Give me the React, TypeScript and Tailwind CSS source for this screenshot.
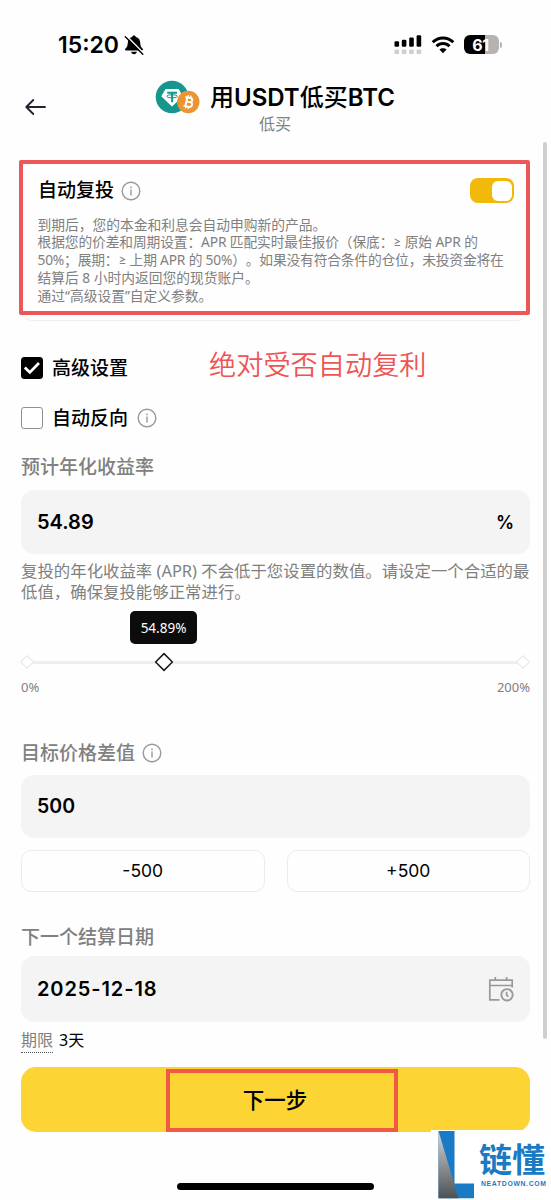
import { useState } from "react";
import type { ReactNode } from "react";
import { clsx } from "clsx";

const termLines = [
  { text: "到期后，您的本金和利息会自动申购新的产品。", spacing: "" },
  { text: "根据您的价差和周期设置：APR 匹配实时最佳报价（保底：≥ 原始 APR 的", spacing: "tracking-[-0.120px]" },
  { text: "50%；展期：≥ 上期 APR 的 50%）。如果没有符合条件的仓位，未投资金将在", spacing: "tracking-[-0.180px]" },
  { text: "结算后 8 小时内返回您的现货账户。", spacing: "" },
  { text: "通过“高级设置”自定义参数。", spacing: "" },
];

const InfoIcon = () => (
  <svg width="20" height="20" viewBox="0 0 20 20" fill="none" stroke="#999" strokeWidth="1.4">
    <circle cx="10" cy="10" r="8.8" />
    <path d="M10 8.6v5.8" />
    <path d="M10 5.4v1.8" />
  </svg>
);

const BellOff = () => (
  <svg width="20" height="20" viewBox="0 0 20 20">
    <path
      d="M10 .6c1 0 1.700.6 1.800 1.400 2.900.7 4.300 2.900 4.400 5.500.1 3.300.6 4.400 2.500 6.200.5.600.3 1.700-.7 1.700H2c-1 0-1.200-1.100-.7-1.700 1.900-1.800 2.400-2.900 2.500-6.200.1-2.600 1.500-4.800 4.400-5.500C8.300 1.200 9 .6 10 .6z"
      fill="#000"
    />
    <path d="M7.100 16.800h5.800c-.3 1.600-1.400 2.500-2.900 2.500s-2.600-.9-2.900-2.500z" fill="#000" />
    <path d="M2.400.800l17 17.200" stroke="#fff" strokeWidth="1.500" />
    <path d="M1.300 1.700l17.500 17.500" stroke="#000" strokeWidth="1.400" strokeLinecap="round" />
  </svg>
);

const SignalIcon = () => (
  <svg width="28" height="20" viewBox="0 0 28 20">
    <g fill="#000">
      <rect x="0.500" y="6.300" width="4.600" height="5.500" rx="1.200" />
      <rect x="7.800" y="4.800" width="4.600" height="7" rx="1.200" />
      <rect x="15.200" y="2.600" width="4.600" height="9.200" rx="1.200" />
      <rect x="22.600" y="0.300" width="4.600" height="11.500" rx="1.200" />
    </g>
    <g fill="#cfcfcf">
      <rect x="0.500" y="14.500" width="4.600" height="4.600" rx="1.200" />
      <rect x="7.800" y="14.500" width="4.600" height="4.600" rx="1.200" />
      <rect x="15.200" y="14.500" width="4.600" height="4.600" rx="1.200" />
      <rect x="22.600" y="14.500" width="4.600" height="4.600" rx="1.200" />
    </g>
  </svg>
);

const WifiIcon = () => (
  <svg width="24" height="18" viewBox="0 0 24 18" fill="none" stroke="#000" strokeWidth="3">
    <path d="M1.700 6.300C7.300.6 16.700.6 22.300 6.300" />
    <path d="M5.500 10.300c3.600-3.600 9.400-3.600 13 0" />
    <path d="M12 17.300l-3.600-3.700c2-1.900 5.200-1.900 7.200 0z" fill="#000" stroke="none" />
  </svg>
);

const Battery = () => (
  <div className="flex items-center">
    <div className="flex h-[19px] w-[35px] items-center justify-center rounded-[6px] bg-[linear-gradient(90deg,#000_61%,#b3b3b3_61%)] pr-[2px] font-['Inter'] text-[16px] leading-none font-bold tracking-[-0.5px] text-white">
      61
    </div>
    <div className="ml-px h-[6px] w-[2px] rounded-r-full bg-[#b3b3b3]" />
  </div>
);

const CoinPair = () => (
  <svg width="46" height="34" viewBox="0 0 46 34">
    <circle cx="17" cy="17" r="16.300" fill="#17968d" />
    <path d="M10.600 9h13l4.200 7.300L17 26.500 6.200 16.300z" fill="#fff" />
    <g fill="none" stroke="#17968d">
      <path d="M12.200 12.700h9.800M17.100 12.700v9.500" strokeWidth="2" />
      <ellipse cx="17.100" cy="16.300" rx="5.300" ry="1.600" strokeWidth="1" />
    </g>
    <circle cx="33.300" cy="22" r="11.200" fill="#eb9532" />
    <g transform="rotate(12 33.300 22)" fill="none" stroke="#fff" strokeWidth="1.900">
      <path d="M29.400 17.600h5.200c3 0 3 4.200 0 4.200h-3.500 3.900c3.400 0 3.400 4.800 0 4.800h-5.600M31.300 17.600v9" />
      <path d="M32 15.300v2.300M34.600 15.300v2.300M32 26.600v2.300M34.600 26.600v2.300" strokeWidth="1.400" />
    </g>
  </svg>
);

const CalendarClock = () => (
  <svg width="26" height="26" viewBox="0 0 26 26" fill="none" stroke="#999" strokeWidth="1.700">
    <path d="M11.500 23.800H1.800V4.200h22.400v5.300H1.800" />
    <path d="M7.300 1v3.200M18.700 1v3.200M24.200 9.500v2" />
    <circle cx="19" cy="18.800" r="5.700" strokeWidth="1.900" />
    <path d="M18.600 15.800v3.200l1.800 1.700" />
  </svg>
);

const Diamond = ({ active = false }: { active?: boolean }) => (
  <svg width="20" height="20" viewBox="0 0 20 20" className="relative z-10 shrink-0">
    <path
      d={active ? "M10 1.600L18.400 10 10 18.400 1.600 10z" : "M10 3.700L16.300 10 10 16.300 3.700 10z"}
      fill="#fff"
      stroke={active ? "#181818" : "#ececec"}
      strokeWidth="1.500"
      strokeLinejoin="round"
    />
  </svg>
);

const Label = ({ children, info = false }: { children: ReactNode; info?: boolean }) => (
  <div className="flex h-6 items-center gap-[7px] text-[19px] leading-none font-medium text-[#808080]">
    <span>{children}</span>
    {info && <InfoIcon />}
  </div>
);

const CheckRow = ({
  label,
  checked,
  onChange,
  info = false,
}: {
  label: string;
  checked: boolean;
  onChange: () => void;
  info?: boolean;
}) => (
  <div className="flex h-[22px] items-center">
    <button
      onClick={onChange}
      className={clsx(
        "flex size-[22px] items-center justify-center rounded-[3px] border",
        checked ? "border-black bg-black" : "border-[#909090] bg-white"
      )}
    >
      {checked && (
        <svg width="18" height="14" viewBox="0 0 18 14" fill="none" stroke="#fff" strokeWidth="2.800">
          <path d="M1.800 6.600l5 4.800 9.200-9.300" />
        </svg>
      )}
    </button>
    <span className="ml-[9px] text-[19px] leading-none font-medium text-black">{label}</span>
    {info && (
      <span className="ml-[9px]">
        <InfoIcon />
      </span>
    )}
  </div>
);

const Watermark = () => (
  <div className="absolute top-[1130px] left-[431px] flex h-[70px] w-[120px] bg-white pl-[7px]">
    <svg width="37" height="69" viewBox="0 0 37 69" className="shrink-0">
      <defs>
        <linearGradient id="steel" x1="0" y1="0" x2="0" y2="1">
          <stop offset="0" stopColor="#d4d6d6" />
          <stop offset="1" stopColor="#4c5154" />
        </linearGradient>
      </defs>
      <path d="M.5 1H16.500v52.500H36V68.300H.5z" fill="#1b7ac4" />
      <path d="M.5 1L20.500 68.300H.5z" fill="url(#steel)" />
    </svg>
    <div className="ml-1 flex flex-col whitespace-nowrap text-[#1b7ac4]">
      <span className="mt-[13px] text-[33px] leading-[34px] font-bold">链懂</span>
      <span className="mt-[2px] ml-[2px] font-['Liberation_Sans'] text-[6.800px] leading-[10px] font-bold tracking-[0.700px]">
        NEATDOWN.COM
      </span>
    </div>
  </div>
);

export default function App() {
  const [autoInvest, setAutoInvest] = useState(true);
  const [advanced, setAdvanced] = useState(true);
  const [reverse, setReverse] = useState(false);

  return (
    <div className="relative h-[1200px] w-[551px] overflow-hidden bg-[#fefefe] font-['Noto_Sans','Lato','Noto_Sans_CJK_SC',sans-serif] text-black">
      {/* Status bar */}
      <div className="flex h-[68px] items-start pt-[34px] pr-[49px] pl-[58px]">
        <div className="flex h-[22px] items-center gap-1">
          <span className="w-[62px] font-['Inter'] text-[23px] leading-none font-semibold whitespace-nowrap">15:20</span>
          <BellOff />
        </div>
        <div className="ml-auto flex h-[21px] items-center gap-[9px]">
          <SignalIcon />
          <WifiIcon />
          <Battery />
        </div>
      </div>

      {/* Header */}
      <header className="flex h-[74px] items-start pl-[24px]">
        <svg width="24" height="18" viewBox="0 0 24 18" fill="none" stroke="#202630" strokeWidth="1.900" strokeLinecap="round" strokeLinejoin="round" className="mt-[30px]">
          <path d="M21 9H2.300M9.300 2L2.300 9l7 7" />
        </svg>
        <div className="ml-[107px] flex flex-col">
          <div className="mt-[12px] flex h-[34px] items-center gap-[9px]">
            <CoinPair />
            <h1 className="pt-[2px] font-['Inter','Noto_Sans_CJK_SC',sans-serif] text-[24px] leading-none font-medium whitespace-nowrap">
              用<span className="font-semibold">USDT</span>低买<span className="font-semibold">BTC</span>
            </h1>
          </div>
          <span className="ml-[104px] text-[16px] leading-[20px] text-[#808080]">低买</span>
        </div>
      </header>

      <main className="flex flex-col pr-[21px] pl-[21px]">
        {/* Auto-invest card */}
        <section className="-ml-[2px] mt-[18px] rounded-b-[14px] border-b border-[#eee] pb-[5px]">
          <div className="h-[155px] rounded-[2px] border-4 border-[#eb5858] pt-[14px] pr-[12px] pl-[15px]">
            <div className="flex h-[25px] items-center">
              <span className="text-[19px] leading-none font-medium">自动复投</span>
              <span className="ml-[7px]">
                <InfoIcon />
              </span>
              <button
                onClick={() => setAutoInvest(!autoInvest)}
                className={clsx(
                  "ml-auto flex h-[25px] w-[44px] items-center rounded-[8px] px-[2px]",
                  autoInvest ? "justify-end bg-[#f0b90b]" : "justify-start bg-[#ccc]"
                )}
              >
                <span className="h-[20px] w-[20px] rounded-[6px] bg-white" />
              </button>
            </div>
            <div className="mt-[12.500px] -ml-[0.500px] text-[13.750px] leading-[17.850px] whitespace-nowrap text-[#808080] [text-spacing-trim:space-all]">
              {termLines.map((line) => (
                <p key={line.text} className={line.spacing}>
                  {line.text}
                </p>
              ))}
            </div>
          </div>
        </section>

        {/* Advanced settings */}
        <div className="mt-[36px] flex h-[22px] items-center">
          <CheckRow label="高级设置" checked={advanced} onChange={() => setAdvanced(!advanced)} />
          <span className="ml-[81px] -translate-y-[3px] text-[27.200px] leading-[28px] font-[350] text-[#ef5454]">
            绝对受否自动复利
          </span>
        </div>
        <div className="mt-[28px]">
          <CheckRow label="自动反向" checked={reverse} onChange={() => setReverse(!reverse)} info />
        </div>

        <div className="mt-[26px]">
          <Label>预计年化收益率</Label>
        </div>
        <div className="mt-[11px] flex h-[64px] items-center justify-between rounded-[13px] bg-[#f4f4f4] px-4 font-['Inter'] text-[20px] font-semibold">
          <span>54.89</span>
          <span className="text-[18px]">%</span>
        </div>
        <div className="mt-[7px] text-[16.420px] leading-[20.700px] whitespace-nowrap text-[#808080]">
          <p>复投的年化收益率 (APR) 不会低于您设置的数值。请设定一个合适的最</p>
          <p>低值，确保复投能够正常进行。</p>
        </div>

        {/* APR slider */}
        <div className="mt-[9px] ml-[109px] flex h-[33px] w-[67px] items-center justify-center rounded-[5px] bg-[#0c0c0c] text-[13.500px] text-white">
          54.89%
        </div>
        <div className="mt-[8px] -mr-[3px] -ml-[4px] flex h-5 items-center">
          <Diamond />
          <div className="-mx-[4px] h-[3px] w-[125px] bg-[#eee]" />
          <Diamond active />
          <div className="-mx-[4px] h-[3px] flex-1 bg-[#eee]" />
          <Diamond />
        </div>
        <div className="mt-[7px] flex justify-between text-[13px] leading-[16px] text-[#808080]">
          <span>0%</span>
          <span>200%</span>
        </div>

        <div className="mt-[46px]">
          <Label info>目标价格差值</Label>
        </div>
        <div className="mt-[10px] flex h-[63px] items-center rounded-[13px] bg-[#f4f4f4] px-4 font-['Inter'] text-[19.500px] font-semibold">
          500
        </div>
        <div className="mt-[12px] grid grid-cols-2 gap-[22px]">
          {["-500", "+500"].map((step) => (
            <button key={step} className="h-[42px] rounded-[10px] border border-[#ececec] font-['Inter'] text-[17.500px]">
              {step}
            </button>
          ))}
        </div>

        <div className="mt-[33px]">
          <Label>下一个结算日期</Label>
        </div>
        <div className="mt-[7px] flex h-[66px] items-center justify-between rounded-[13px] bg-[#f4f4f4] px-4 font-['Inter'] text-[20px] font-semibold">
          <span className="tracking-[0.900px]">2025-12-18</span>
          <CalendarClock />
        </div>
        <div className="mt-[7px] flex h-[24px] gap-[6px] text-[16px] leading-[22px]">
          <span className="border-b border-dotted border-[#555] text-[#808080]">期限</span>
          <span>3天</span>
        </div>

        <button className="mt-[14px] flex h-[65px] justify-center rounded-[15px] bg-[#fcd535] pt-[2px]">
          <span className="ml-[13px] flex h-[63px] w-[232px] items-center justify-center border-4 border-[#f05a43] pr-[14px] pb-[3px] text-[21.500px] leading-none font-medium">
            下一步
          </span>
        </button>
        <div className="mt-[51px] ml-[156px] h-[7px] w-[197px] rounded-full bg-black" />
      </main>

      {/* Scrollbar thumb */}
      <div className="absolute top-[142px] left-[543px] h-[897px] w-[4px] rounded-full bg-[#cfcfcf]" />
      <Watermark />
    </div>
  );
}
